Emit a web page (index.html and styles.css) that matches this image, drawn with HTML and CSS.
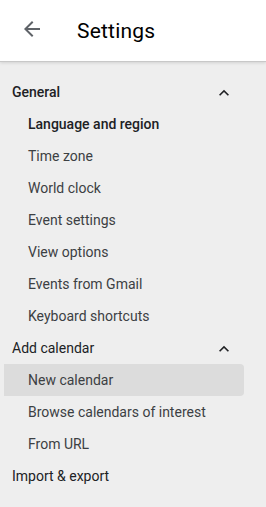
FILE: index.html
```html
<!DOCTYPE html>
<html lang="en">
<head>
    <meta charset="UTF-8">
    <meta name="viewport" content="width=device-width, initial-scale=1.0">
    <title>Settings</title>
    <link rel="stylesheet" href="styles.css">
</head>
<body>
    <div class="header">
        <button class="back-btn" aria-label="Back">
            <svg viewBox="0 0 24 24" width="24" height="24"><path d="M20 11H7.83l5.59-5.59L12 4l-8 8 8 8 1.41-1.41L7.83 13H20v-2z" fill="#5f6368"/></svg>
        </button>
        <h1>Settings</h1>
    </div>

    <div class="nav">
        <div class="nav-group">
            General
            <svg class="chevron" viewBox="0 0 24 24" width="20" height="20"><path d="M12 8l-6 6 1.41 1.41L12 10.83l4.59 4.58L18 14z" fill="#202124"/></svg>
        </div>
        <div class="nav-item bold">Language and region</div>
        <div class="nav-item">Time zone</div>
        <div class="nav-item">World clock</div>
        <div class="nav-item">Event settings</div>
        <div class="nav-item">View options</div>
        <div class="nav-item">Events from Gmail</div>
        <div class="nav-item">Keyboard shortcuts</div>

        <div class="nav-group">
            Add calendar
            <svg class="chevron" viewBox="0 0 24 24" width="20" height="20"><path d="M12 8l-6 6 1.41 1.41L12 10.83l4.59 4.58L18 14z" fill="#202124"/></svg>
        </div>
        <div class="nav-item active">New calendar</div>
        <div class="nav-item">Browse calendars of interest</div>
        <div class="nav-item">From URL</div>

        <div class="nav-group">Import &amp; export</div>
    </div>
</body>
</html>
```

FILE: styles.css
```css
body {
    font-family: Roboto, 'Liberation Sans', sans-serif;
    background-color: #eeeeee;
    color: #202124;
    margin: 0;
    padding: 0;
}

.header {
    height: 61px;
    background-color: #fff;
    display: flex;
    align-items: center;
    border-bottom: 1px solid #c8c8c8;
    box-shadow: 0 1px 3px rgba(0, 0, 0, 0.12);
}

.back-btn {
    width: 24px;
    height: 24px;
    margin-left: 20px;
    margin-top: -3px;
    padding: 0;
    border: none;
    background: none;
}

h1 {
    margin: 0 0 0 33px;
    font-size: 21px;
    font-weight: 400;
    color: #000;
    letter-spacing: 0.2px;
}

.nav {
    padding-top: 14px;
}

.nav-group {
    height: 32px;
    display: flex;
    align-items: center;
    justify-content: space-between;
    padding: 0 32px 0 12px;
    font-size: 14px;
    font-weight: 400;
    width: 222px;
    color: #202124;
}

.nav > .nav-group:first-child {
    font-weight: 500;
}

.chevron {
    margin-top: 1px;
}

.nav-item {
    height: 32px;
    line-height: 32px;
    padding-left: 28px;
    font-size: 14px;
    color: #3c4043;
    width: 216px;
    border-radius: 0 4px 4px 0;
}

.nav-item.bold {
    font-weight: 500;
    color: #202124;
}

.nav-item.active {
    background-color: #dcdcdc;
    margin-left: 4px;
    padding-left: 24px;
}
```
